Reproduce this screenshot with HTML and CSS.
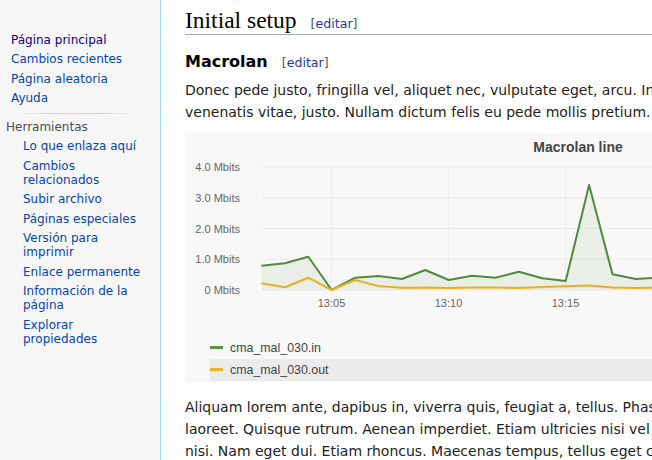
FILE: index.html
```html
<!DOCTYPE html>
<html lang="es">
<head>
  <meta charset="UTF-8">
  <meta name="viewport" content="width=device-width, initial-scale=1.0">
  <title>Initial setup</title>
  <link rel="stylesheet" href="styles.css">
</head>
<body>
<div class="page">

  <nav class="sidebar">
    <ul class="nav-main">
      <li><a class="visited" href="#">Página principal</a></li>
      <li><a href="#">Cambios recientes</a></li>
      <li><a href="#">Página aleatoria</a></li>
      <li><a href="#">Ayuda</a></li>
    </ul>
    <div class="portal">
      <h3 class="portal-title">Herramientas</h3>
      <ul class="nav-tools">
        <li><a href="#">Lo que enlaza aquí</a></li>
        <li><a href="#">Cambios relacionados</a></li>
        <li><a href="#">Subir archivo</a></li>
        <li><a href="#">Páginas especiales</a></li>
        <li><a href="#">Versión para imprimir</a></li>
        <li><a href="#">Enlace permanente</a></li>
        <li><a href="#">Información de la página</a></li>
        <li><a href="#">Explorar propiedades</a></li>
      </ul>
    </div>
  </nav>

  <main class="content">
    <h2 class="section-title">Initial setup<span class="editsection">[<a href="#">editar</a>]</span></h2>
    <h3 class="subsection-title">Macrolan<span class="editsection">[<a href="#">editar</a>]</span></h3>
    <p>Donec pede justo, fringilla vel, aliquet nec, vulputate eget, arcu. In enim justo, rhoncus ut, imperdiet a, venenatis vitae, justo. Nullam dictum felis eu pede mollis pretium. Integer tincidunt. Cras dapibus.</p>

    <div class="chart">
      <div class="chart-title">Macrolan line</div>
      <svg class="chart-plot" width="750" height="153" viewBox="0 0 750 153">
        <!-- grid -->
        <g class="grid">
          <line x1="76" y1="10" x2="750" y2="10"/>
          <line x1="76" y1="40.75" x2="750" y2="40.75"/>
          <line x1="76" y1="71.5" x2="750" y2="71.5"/>
          <line x1="76" y1="102.25" x2="750" y2="102.25"/>
          <line x1="76" y1="133" x2="750" y2="133"/>
          <line x1="146.5" y1="10" x2="146.5" y2="133"/>
          <line x1="263.5" y1="10" x2="263.5" y2="133"/>
          <line x1="380.5" y1="10" x2="380.5" y2="133"/>
          <line x1="497.5" y1="10" x2="497.5" y2="133"/>
        </g>
        <g class="axis-y">
          <text x="55" y="14">4.0 Mbits</text>
          <text x="55" y="45">3.0 Mbits</text>
          <text x="55" y="76">2.0 Mbits</text>
          <text x="55" y="106">1.0 Mbits</text>
          <text x="55" y="137">0 Mbits</text>
        </g>
        <g class="axis-x">
          <text x="146.5" y="150">13:05</text>
          <text x="263.5" y="150">13:10</text>
          <text x="380.5" y="150">13:15</text>
          <text x="497.5" y="150">13:20</text>
        </g>
        <polygon class="area-in" points="76.5,133 76.5,108.7 99.9,106.3 123.3,99.7 146.7,133 170.1,120.7 193.5,119 216.9,122 240.3,113 263.7,123 287.1,118.7 310.5,120.7 333.9,114.7 357.3,121.3 380.7,124 404.1,28 427.5,117.3 450.9,122 474.3,120.7 497.7,119 521.1,121 521.1,133"/>
        <polyline class="line-in" points="76.5,108.7 99.9,106.3 123.3,99.7 146.7,133 170.1,120.7 193.5,119 216.9,122 240.3,113 263.7,123 287.1,118.7 310.5,120.7 333.9,114.7 357.3,121.3 380.7,124 404.1,28 427.5,117.3 450.9,122 474.3,120.7 497.7,119 521.1,121"/>
        <polyline class="line-out" points="76.5,126.3 99.9,130.3 123.3,120.7 146.7,133 170.1,123 193.5,129 216.9,130.7 240.3,130.5 263.7,131 287.1,130.5 310.5,130.5 333.9,131 357.3,130 380.7,129.3 404.1,128.5 427.5,130.5 450.9,131 474.3,130.5 497.7,130.5 521.1,131"/>
      </svg>
      <ul class="legend">
        <li class="legend-item"><span class="swatch swatch-in"></span>cma_mal_030.in</li>
        <li class="legend-item active"><span class="swatch swatch-out"></span>cma_mal_030.out</li>
      </ul>
    </div>

    <p class="after-chart">Aliquam lorem ante, dapibus in, viverra quis, feugiat a, tellus. Phasellus viverra nulla ut metus varius laoreet. Quisque rutrum. Aenean imperdiet. Etiam ultricies nisi vel augue. Curabitur ullamcorper ultricies nisi. Nam eget dui. Etiam rhoncus. Maecenas tempus, tellus eget condimentum rhoncus, sem quam semper libero, sit amet adipiscing sem neque sed ipsum.</p>
  </main>

</div>
</body>
</html>
```

FILE: styles.css
```css
html, body {
  margin: 0;
  padding: 0;
  overflow: hidden;
  background: #fff;
}

.page {
  display: flex;
  min-height: 100vh;
}

/* sidebar */
.sidebar {
  flex: none;
  width: 160px;
  background: #f6f6f6;
  border-right: 1px solid #a7d7f9;
  font-family: "DejaVu Sans", sans-serif;
  font-size: 12px;
  line-height: 14px;
}

.sidebar ul {
  list-style: none;
  margin: 0;
  padding: 0;
}

.sidebar li {
  padding: 2.75px 0;
}

.sidebar a {
  color: #0645ad;
  text-decoration: none;
}

.sidebar a.visited {
  color: #0b0080;
}

.nav-main {
  margin-top: 29.75px !important;
  padding-left: 11px !important;
}

.portal {
  margin-top: 5.25px;
}

.portal:before {
  content: "";
  display: block;
  height: 1px;
  margin: 0 23px 0 16px;
  background: linear-gradient(to right, rgba(200, 204, 209, 0), #d4d6d9 30%, #d4d6d9 70%, rgba(200, 204, 209, 0));
}

.portal-title {
  margin: 6px 0 0 6px;
  font-size: 12px;
  font-weight: normal;
  color: #4d4d4d;
}

.nav-tools {
  margin-top: 2.25px !important;
  padding: 0 16px 0 23px !important;
}

/* content */
.content {
  flex: none;
  width: 750px;
  padding-left: 24px;
  font-family: "DejaVu Sans", sans-serif;
  font-size: 14px;
  color: #222;
}

.section-title {
  margin: 5.5px 0 0;
  font-family: "Liberation Serif", serif;
  font-size: 23.5px;
  font-weight: normal;
  line-height: 28px;
  color: #000;
  border-bottom: 1px solid #a2a9b1;
}

.subsection-title {
  margin: 14.3px 0 0;
  font-size: 16px;
  line-height: 25.6px;
  color: #000;
}

.editsection {
  margin-left: 14px;
  font-family: "DejaVu Sans", sans-serif;
  font-size: 12.6px;
  font-weight: normal;
  line-height: 1;
  color: #54595d;
}

.editsection a {
  color: #1d3a9a;
  text-decoration: none;
}

.content p {
  margin: 4.75px 0 0;
  line-height: 22px;
}

.content p.after-chart {
  margin-top: 14px;
}

/* chart */
.chart {
  margin-top: 10px;
  padding-bottom: 1.5px;
  background: #f8f8f8;
  font-family: "Liberation Sans", Arial, sans-serif;
}

.chart-title {
  padding: 4px 0 0 36px;
  line-height: 20px;
  text-align: center;
  font-size: 14px;
  font-weight: bold;
  color: #454545;
}

.chart-plot {
  display: block;
}

.grid line {
  stroke: #ececec;
  stroke-width: 1;
}

.axis-y text,
.axis-x text {
  font-size: 11px;
  fill: #666;
}

.axis-y text {
  text-anchor: end;
}

.axis-x text {
  text-anchor: middle;
}

.area-in {
  fill: rgba(90, 140, 70, 0.09);
}

.line-in,
.line-out {
  fill: none;
  stroke-width: 2;
  stroke-linejoin: round;
}

.line-in {
  stroke: #4f8a3e;
}

.line-out {
  stroke: #ebb020;
}

.legend {
  list-style: none;
  margin: 26.5px 0 0 25px;
  padding: 0;
}

.legend-item {
  display: flex;
  align-items: center;
  height: 22px;
  font-size: 12.4px;
  color: #444;
}

.legend-item.active {
  background: #ebebeb;
}

.swatch {
  width: 12.5px;
  height: 3px;
  margin-right: 7.5px;
}

.swatch-in {
  background: #5a8f47;
}

.swatch-out {
  background: #ebb12a;
}
```
